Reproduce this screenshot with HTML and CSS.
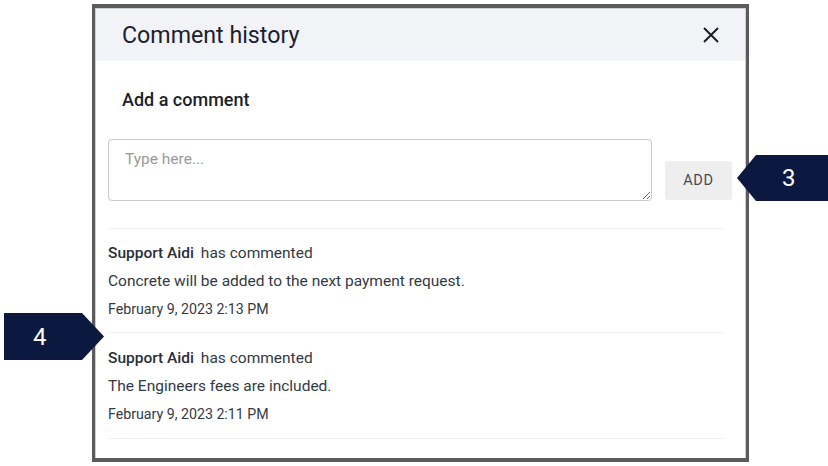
FILE: index.html
```html
<!DOCTYPE html>
<html lang="en">
<head>
    <meta charset="UTF-8">
    <meta name="viewport" content="width=device-width, initial-scale=1.0">
    <title>Comment history</title>
    <link rel="stylesheet" href="styles.css">
</head>
<body>
    <div class="modal">
        <div class="modal-head">
            <h2>Comment history</h2>
            <button class="close-btn" aria-label="Close">
                <svg width="16" height="16" viewBox="0 0 16 16">
                    <path d="M1 1 L15 15 M15 1 L1 15" stroke="#1b1f2a" stroke-width="2" fill="none"/>
                </svg>
            </button>
        </div>

        <div class="modal-body">
            <h3>Add a comment</h3>
            <div class="add-row">
                <textarea placeholder="Type here..."></textarea>
                <button id="add-btn">ADD</button>
            </div>

            <div class="comments">
                <div class="comment">
                    <p class="who"><b>Support Aidi</b> has commented</p>
                    <p class="text">Concrete will be added to the next payment request.</p>
                    <p class="date">February 9, 2023 2:13 PM</p>
                </div>
                <div class="comment">
                    <p class="who"><b>Support Aidi</b> has commented</p>
                    <p class="text">The Engineers fees are included.</p>
                    <p class="date">February 9, 2023 2:11 PM</p>
                </div>
            </div>
        </div>
    </div>

    <!-- callouts -->
    <div class="callout callout-3">3</div>
    <div class="callout callout-4">4</div>
</body>
</html>
```

FILE: styles.css
```css
*{
    margin: 0px;
    padding: 0px;
    box-sizing: border-box;
    font-family: Roboto, 'Liberation Sans', sans-serif;
}
body{
    background-color: white;
    width: 828px;
    height: 466px;
    overflow: hidden;
    position: relative;
}

.modal{
    width: 657px;
    height: 458px;
    margin: 4px 0 0 92px;
    border: 3px solid #5b5b5b;
    border-top-width: 4px;
    border-bottom-width: 4px;
    box-shadow: inset 1px 1px 0 #cfcfcf, inset -1px 0 0 #cfcfcf;
    display: flex;
    flex-direction: column;
    padding: 1px 1px 0 1px;
    background: white;
}

/* header */
.modal-head{
    height: 52px;
    background-color: #f2f3f7;
    display: flex;
    flex-direction: row;
    justify-content: space-between;
    align-items: center;
    padding: 0 26px 0 26px;
}
.modal-head h2{
    font-size: 23.2px;
    font-weight: 400;
    color: #1b2030;
}
.close-btn{
    border: none;
    background: none;
    width: 16px;
    height: 16px;
    display: flex;
}

/* body */
.modal-body{
    padding: 0 13px 0 12px;
}
.modal-body h3{
    font-size: 18px;
    font-weight: 500;
    color: #1b1f2a;
    padding-left: 14px;
    margin-top: 29px;
    line-height: 20px;
}
.add-row{
    display: flex;
    flex-direction: row;
    align-items: flex-end;
    gap: 13px;
    margin-top: 29px;
}
.add-row textarea{
    flex: 1;
    height: 62px;
    border: 1px solid #cbcbcb;
    border-radius: 4px;
    padding: 10px 16px;
    font-size: 15.5px;
    color: #333;
    outline: none;
}
.add-row textarea::placeholder{
    color: #9a9a9a;
}
#add-btn{
    width: 67px;
    height: 39px;
    border: none;
    border-radius: 3px;
    background-color: #eeeeee;
    color: #444a55;
    font-size: 14.5px;
    letter-spacing: 0.7px;
    margin-bottom: 1px;
}

/* comments */
.comments{
    margin-top: 27px;
    margin-right: 8px;
    border-top: 1px solid #f0f0f0;
}
.comment{
    padding: 10px 0 9px 0;
    border-bottom: 1px solid #f0f0f0;
    color: #333a45;
}
.comment + .comment{
    padding: 11px 0 10px 0;
}
.comment p{
    line-height: 28px;
    font-size: 15.5px;
}
.comment .who b{
    font-weight: 500;
    color: #2a2f38;
    margin-right: 3px;
}
.comment .date{
    font-size: 14.2px;
}

/* numbered callouts over the picture */
.callout{
    position: absolute;
    background-color: #0b1840;
    color: white;
    font-size: 24px;
    display: flex;
    align-items: center;
}
.callout-3{
    left: 737px;
    top: 155px;
    width: 91px;
    height: 46px;
    padding-left: 45px;
    clip-path: polygon(0 50%, 19px 0, 100% 0, 100% 100%, 19px 100%);
}
.callout-4{
    left: 4px;
    top: 313px;
    width: 100px;
    height: 47px;
    padding-left: 29px;
    clip-path: polygon(0 0, 78px 0, 100% 50%, 78px 100%, 0 100%);
}
```
